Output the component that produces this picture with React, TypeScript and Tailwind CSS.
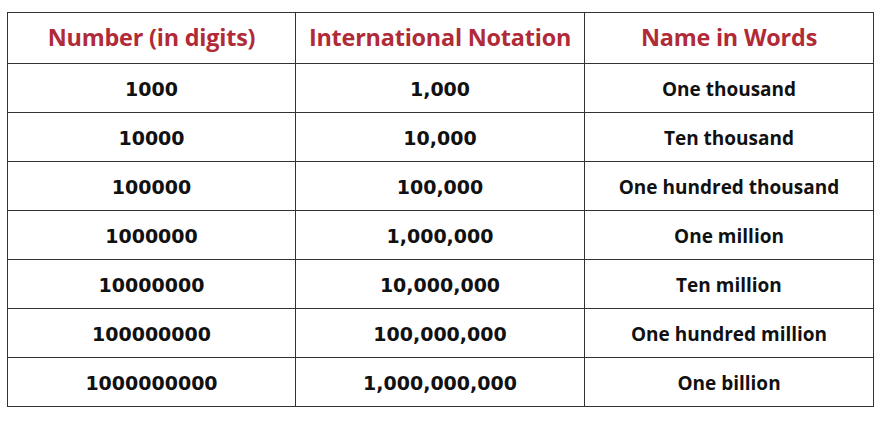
const rows = [
  ['1000', '1,000', 'One thousand'],
  ['10000', '10,000', 'Ten thousand'],
  ['100000', '100,000', 'One hundred thousand'],
  ['1000000', '1,000,000', 'One million'],
  ['10000000', '10,000,000', 'Ten million'],
  ['100000000', '100,000,000', 'One hundred million'],
  ['1000000000', '1,000,000,000', 'One billion'],
]

export default function App() {
  return (
    <div className="w-[878px] h-[430px] bg-white pt-[12px] pl-[7px] font-['Open_Sans',sans-serif]">
      <table className="border-collapse table-fixed w-[866px]">
        <colgroup>
          <col className="w-[288px]" />
          <col className="w-[289px]" />
          <col className="w-[289px]" />
        </colgroup>
        <thead>
          <tr className="h-[51px]">
            {['Number (in digits)', 'International Notation', 'Name in Words'].map((h) => (
              <th key={h} className="border border-[#333] text-center text-[23.4px] font-bold text-[#b12a37] p-0 tracking-[-0.2px]">
                {h}
              </th>
            ))}
          </tr>
        </thead>
        <tbody>
          {rows.map((r) => (
            <tr key={r[0]} className="h-[49px]">
              {r.map((c, i) => (
                <td
                  key={i}
                  className={
                    i < 2
                      ? "border border-[#333] text-center text-[19px] font-bold text-[#111] p-0 pt-[2px] font-['DejaVu_Sans',sans-serif]"
                      : 'border border-[#333] text-center text-[19px] font-bold text-[#111] p-0 pt-[2px]'
                  }
                >
                  {c}
                </td>
              ))}
            </tr>
          ))}
        </tbody>
      </table>
    </div>
  )
}
